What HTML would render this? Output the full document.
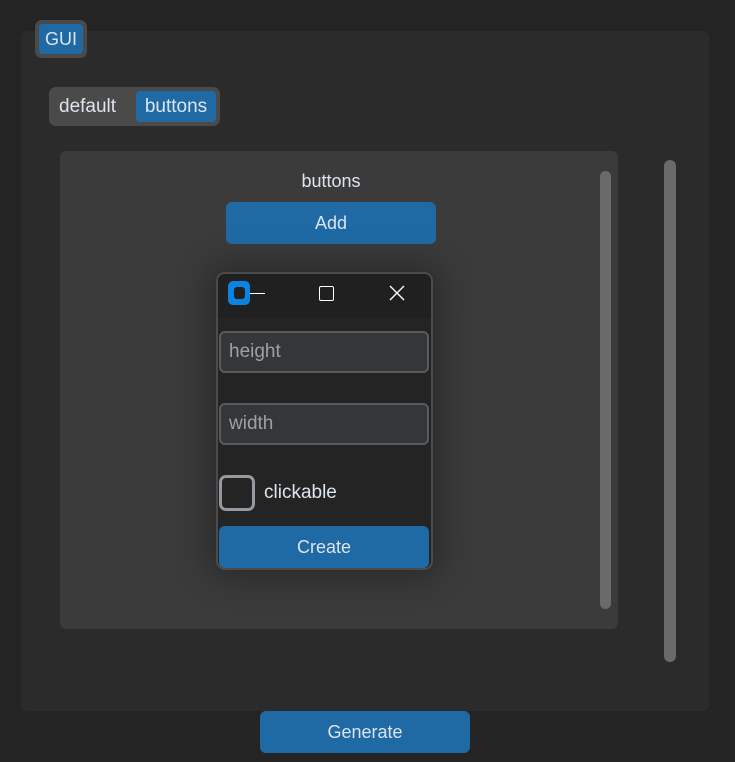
<!DOCTYPE html><html><head><style>
body{margin:0;width:735px;height:762px;background:#242424;position:relative;overflow:hidden;font-family:"Liberation Sans",sans-serif;color:#dce4ee}
div{position:absolute;box-sizing:border-box}
.btn{background:#1f6aa5;border-radius:6px;display:flex;align-items:center;justify-content:center;font-size:18px}
.ent{background:#343638;border:2px solid #565b5e;border-radius:6px;color:#9ea0a3;font-size:19px;padding-left:8px;display:flex;align-items:center}
</style></head><body>
<div style="left:21px;top:31px;width:688px;height:680px;background:#2b2b2b;border-radius:6px"></div>
<div style="left:35px;top:20px;width:52px;height:38px;background:#4a4a4a;border-radius:7px"></div>
<div class="btn" style="left:39px;top:24px;width:44px;height:30px;font-size:18px;border-radius:4px">GUI</div>
<div style="left:49px;top:87px;width:171px;height:39px;background:#4a4a4a;border-radius:7px"></div>
<div style="left:59px;top:93px;height:28px;font-size:19px;line-height:28px">default</div>
<div class="btn" style="left:136px;top:91px;width:80px;height:31px;font-size:19px;border-radius:4px">buttons</div>
<div style="left:60px;top:151px;width:558px;height:478px;background:#3b3b3b;border-radius:6px"></div>
<div style="left:600px;top:171px;width:11px;height:438px;background:#6a6a6a;border-radius:6px"></div>
<div style="left:664px;top:160px;width:12px;height:502px;background:#6a6a6a;border-radius:6px"></div>
<div style="left:226px;top:169px;width:210px;height:24px;text-align:center;font-size:18px;line-height:24px">buttons</div>
<div class="btn" style="left:226px;top:202px;width:210px;height:42px">Add</div>
<div style="left:216px;top:272px;width:217px;height:298px;background:#242424;border:2px solid #4b4b4b;border-radius:9px;overflow:hidden;box-shadow:0 0 35px 8px rgba(0,0,0,.3)">
<div style="left:0;top:0;width:215px;height:44px;background:#202020"></div>
</div>
<div style="left:228px;top:281px;width:22px;height:24px;background:#0a84e0;border-radius:5px"></div>
<div style="left:234px;top:287px;width:11px;height:12px;background:#202020;border-radius:3px"></div>
<div style="left:250px;top:293px;width:15px;height:1px;background:#fff"></div>
<div style="left:319px;top:286px;width:15px;height:15px;border:1.5px solid #fff;border-radius:2px"></div>
<svg style="position:absolute;left:389px;top:285px" width="16" height="16"><path d="M1 1L15 15M15 1L1 15" stroke="#fff" stroke-width="1.4"/></svg>
<div class="ent" style="left:219px;top:331px;width:210px;height:42px">height</div>
<div class="ent" style="left:219px;top:403px;width:210px;height:42px">width</div>
<div style="left:219px;top:475px;width:36px;height:36px;border:3px solid #949a9f;border-radius:7px"></div>
<div style="left:264px;top:481px;font-size:19px;line-height:24px">clickable</div>
<div class="btn" style="left:219px;top:526px;width:210px;height:42px">Create</div>
<div class="btn" style="left:260px;top:711px;width:210px;height:42px">Generate</div>
</body></html>
